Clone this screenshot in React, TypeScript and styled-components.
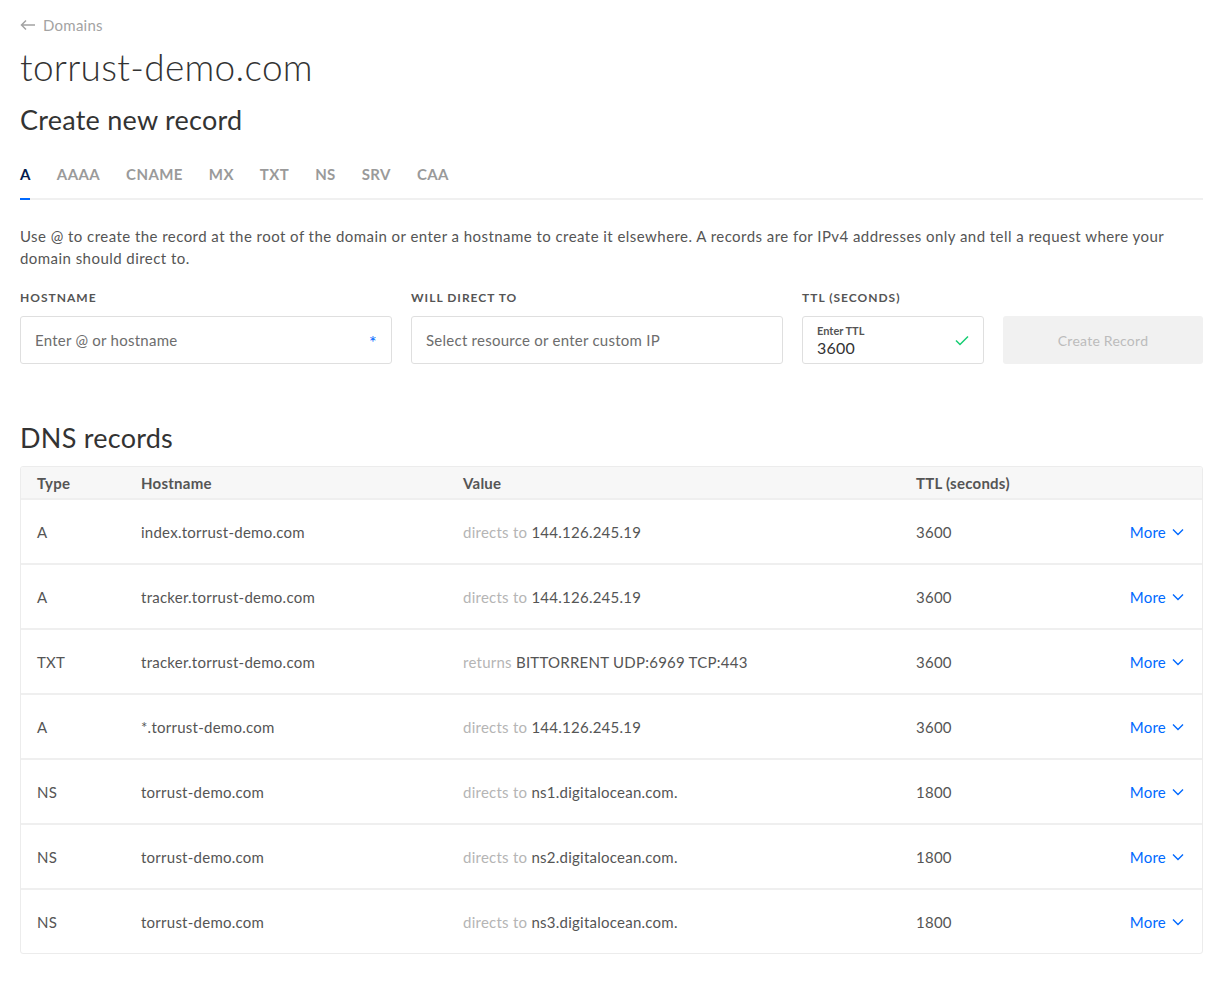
import React from "react";
import styled, { createGlobalStyle } from "styled-components";

const Global = createGlobalStyle`
  html, body { margin: 0; padding: 0; background: #fff; }
  body { font-family: Lato, "Liberation Sans", sans-serif; color: #444; letter-spacing: 0.25px; }
  * { box-sizing: border-box; }
`;

const Page = styled.div`
  padding: 14px 20px 30px 20px;
  width: 1223px;
`;

const BackLink = styled.a`
  display: inline-flex;
  align-items: center;
  gap: 7px;
  color: #a3a3a3;
  font-size: 15px;
  text-decoration: none;
  height: 22px;
`;

const Title = styled.h1`
  margin: 6px 0 0 0;
  font-size: 37px;
  font-weight: 300;
  color: #333;
  line-height: 50px;
  letter-spacing: 0.3px;
`;

const SubTitle = styled.h2`
  margin: 10px 0 0 0;
  font-size: 27px;
  font-weight: 400;
  color: #333;
  line-height: 36px;
`;

const Tabs = styled.div`
  display: flex;
  gap: 26px;
  margin-top: 21px;
  border-bottom: 2px solid #f0f0f0;
`;

const Tab = styled.div<{ $active?: boolean }>`
  font-size: 15px;
  font-weight: 700;
  color: ${(p) => (p.$active ? "#031b4e" : "#9a9a9a")};
  padding: 6px 0 15px 0;
  position: relative;
  letter-spacing: 0.4px;
  &::after {
    content: "";
    display: ${(p) => (p.$active ? "block" : "none")};
    position: absolute;
    left: 0;
    bottom: -2px;
    width: 10px;
    height: 2px;
    background: #0069ff;
  }
`;

const Desc = styled.p`
  margin: 25px 0 0 0;
  font-size: 15px;
  line-height: 22px;
  color: #555;
  letter-spacing: 0.45px;
`;

const FormGrid = styled.div`
  display: grid;
  grid-template-columns: 372px 372px 182px 1fr;
  column-gap: 19px;
  row-gap: 11px;
  margin-top: 21px;
  align-items: end;
`;

const Label = styled.div`
  font-size: 12px;
  font-weight: 700;
  letter-spacing: 1px;
  color: #555;
  text-transform: uppercase;
`;

const InputBox = styled.div`
  height: 48px;
  border: 1px solid #dfdfdf;
  border-radius: 3px;
  display: flex;
  align-items: center;
  padding: 0 14px;
  font-size: 15px;
  color: #6d6d6d;
`;

const Placeholder = styled.span`
  flex: 1;
`;

const Required = styled.span`
  color: #0069ff;
  font-size: 18px;
  line-height: 1;
  padding-top: 4px;
`;

const TtlInner = styled.div`
  flex: 1;
  display: flex;
  flex-direction: column;
  padding-top: 2px;
`;

const TtlLabel = styled.span`
  font-size: 11px;
  font-weight: 700;
  color: #555;
  line-height: 14px;
  letter-spacing: 0;
`;

const TtlValue = styled.span`
  font-size: 16px;
  color: #333;
  line-height: 20px;
`;

const CreateButton = styled.button`
  height: 48px;
  border: none;
  border-radius: 3px;
  background: #f1f1f1;
  color: #bcbcbc;
  font-family: inherit;
  font-size: 14px;
  letter-spacing: 0.25px;
`;

const SectionTitle = styled.h2`
  margin: 56px 0 0 0;
  font-size: 27px;
  font-weight: 400;
  color: #333;
  line-height: 36px;
`;

const Table = styled.div`
  margin-top: 10px;
  border: 1px solid #ececec;
  border-radius: 3px;
  overflow: hidden;
`;

const gridCols = "104px 322px 453px 1fr 120px";

const HeaderRow = styled.div`
  display: grid;
  grid-template-columns: ${gridCols};
  height: 31px;
  align-items: center;
  background: #f7f7f7;
  padding-left: 16px;
  font-size: 15px;
  font-weight: 700;
  color: #555;
`;

const Row = styled.div`
  display: grid;
  grid-template-columns: ${gridCols};
  height: 65px;
  align-items: center;
  border-top: 2px solid #efefef;
  padding-left: 16px;
  font-size: 15px;
  color: #555;
`;

const Muted = styled.span`
  color: #b5b5b5;
`;

const MoreCell = styled.div`
  display: flex;
  justify-content: flex-end;
  align-items: center;
  gap: 6px;
  padding-right: 18px;
  color: #0069ff;
  font-size: 15px;
`;

const ArrowLeft = () => (
  <svg width="16" height="12" viewBox="0 0 16 12" fill="none" stroke="#a3a3a3" strokeWidth="1.5">
    <path d="M15 6H1.5M6 1.5L1.5 6L6 10.5" />
  </svg>
);

const Check = () => (
  <svg width="14" height="11" viewBox="0 0 14 11" fill="none" stroke="#15cd72" strokeWidth="1.5">
    <path d="M1 5.5L5 9.5L13 1.5" />
  </svg>
);

const Chevron = () => (
  <svg width="12" height="8" viewBox="0 0 12 8" fill="none" stroke="#0069ff" strokeWidth="1.4">
    <path d="M1 1.5L6 6.5L11 1.5" />
  </svg>
);

const records = [
  { type: "A", host: "index.torrust-demo.com", verb: "directs to", value: "144.126.245.19", ttl: "3600" },
  { type: "A", host: "tracker.torrust-demo.com", verb: "directs to", value: "144.126.245.19", ttl: "3600" },
  { type: "TXT", host: "tracker.torrust-demo.com", verb: "returns", value: "BITTORRENT UDP:6969 TCP:443", ttl: "3600" },
  { type: "A", host: "*.torrust-demo.com", verb: "directs to", value: "144.126.245.19", ttl: "3600" },
  { type: "NS", host: "torrust-demo.com", verb: "directs to", value: "ns1.digitalocean.com.", ttl: "1800" },
  { type: "NS", host: "torrust-demo.com", verb: "directs to", value: "ns2.digitalocean.com.", ttl: "1800" },
  { type: "NS", host: "torrust-demo.com", verb: "directs to", value: "ns3.digitalocean.com.", ttl: "1800" },
];

const tabs = ["A", "AAAA", "CNAME", "MX", "TXT", "NS", "SRV", "CAA"];

export default function App() {
  return (
    <>
      <Global />
      <Page>
        <BackLink href="#">
          <ArrowLeft />
          Domains
        </BackLink>
        <Title>torrust-demo.com</Title>
        <SubTitle>Create new record</SubTitle>
        <Tabs>
          {tabs.map((t, i) => (
            <Tab key={t} $active={i === 0}>
              {t}
            </Tab>
          ))}
        </Tabs>
        <Desc>
          Use @ to create the record at the root of the domain or enter a hostname to create it elsewhere. A records are
          for IPv4 addresses only and tell a request where your domain should direct to.
        </Desc>
        <FormGrid>
          <Label>Hostname</Label>
          <Label>Will direct to</Label>
          <Label>TTL (seconds)</Label>
          <div />
          <InputBox>
            <Placeholder>Enter @ or hostname</Placeholder>
            <Required>*</Required>
          </InputBox>
          <InputBox>
            <Placeholder>Select resource or enter custom IP</Placeholder>
          </InputBox>
          <InputBox>
            <TtlInner>
              <TtlLabel>Enter TTL</TtlLabel>
              <TtlValue>3600</TtlValue>
            </TtlInner>
            <Check />
          </InputBox>
          <CreateButton>Create Record</CreateButton>
        </FormGrid>
        <SectionTitle>DNS records</SectionTitle>
        <Table>
          <HeaderRow>
            <div>Type</div>
            <div>Hostname</div>
            <div>Value</div>
            <div>TTL (seconds)</div>
            <div />
          </HeaderRow>
          {records.map((r, i) => (
            <Row key={i}>
              <div>{r.type}</div>
              <div>{r.host}</div>
              <div>
                <Muted>{r.verb}</Muted> {r.value}
              </div>
              <div>{r.ttl}</div>
              <MoreCell>
                More <Chevron />
              </MoreCell>
            </Row>
          ))}
        </Table>
      </Page>
    </>
  );
}
